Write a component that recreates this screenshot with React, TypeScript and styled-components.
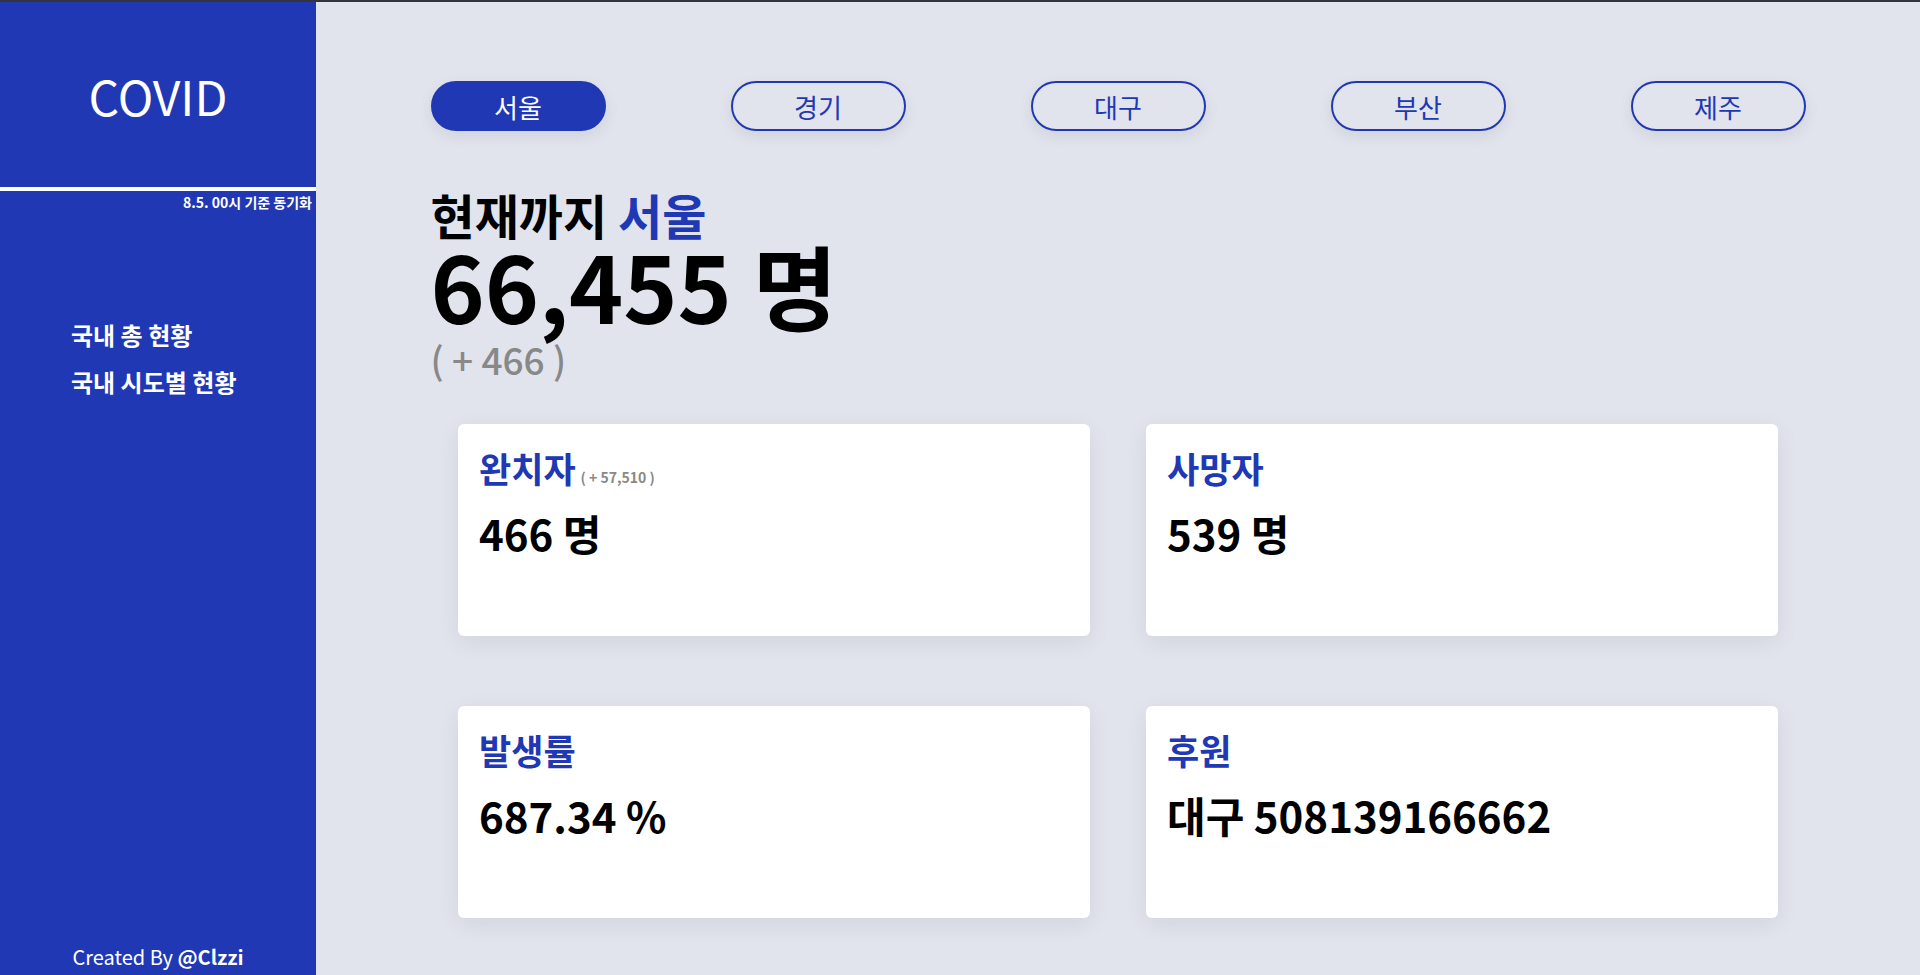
import React, { useState } from 'react';
import styled, { createGlobalStyle } from 'styled-components';

const BLUE = '#2038b4';

const GlobalStyle = createGlobalStyle`
  html, body {
    margin: 0;
    padding: 0;
  }
  body {
    font-family: "Noto Sans CJK KR", "Noto Sans", sans-serif;
  }
  * {
    box-sizing: border-box;
  }
`;

const Page = styled.div`
  display: flex;
  height: 100vh;
  border-top: 2px solid #34353a;
  overflow: hidden;
`;

const Sidebar = styled.aside`
  width: 316px;
  flex-shrink: 0;
  display: flex;
  flex-direction: column;
  background: ${BLUE};
  color: #fff;
`;

const Logo = styled.div`
  height: 185px;
  display: flex;
  align-items: center;
  justify-content: center;
  font-size: 48px;
  font-weight: 400;
`;

const Divider = styled.div`
  height: 4px;
  background: #fff;
`;

const SyncNote = styled.div`
  margin-top: 1px;
  padding-right: 4px;
  text-align: right;
  font-size: 14px;
  font-weight: 700;
`;

const Nav = styled.nav`
  margin-top: 106px;
  padding-left: 71px;
  display: flex;
  flex-direction: column;
  gap: 13px;
`;

const NavItem = styled.a`
  color: #fff;
  font-size: 24px;
  font-weight: 700;
  line-height: 34px;
  text-decoration: none;
  cursor: pointer;
`;

const Footer = styled.footer`
  margin-top: auto;
  padding-bottom: 4px;
  text-align: center;
  font-size: 20px;
  font-weight: 400;

  b {
    font-weight: 700;
  }
`;

const Main = styled.main`
  flex: 1;
  background: #e1e4ec;
  padding-top: 79px;
`;

const Tabs = styled.div`
  display: flex;
  justify-content: center;
  gap: 125px;
`;

const Tab = styled.button<{ $active: boolean }>`
  width: 175px;
  height: 50px;
  border-radius: 25px;
  border: 2px solid ${BLUE};
  background: ${(p) => (p.$active ? BLUE : 'transparent')};
  color: ${(p) => (p.$active ? '#fff' : BLUE)};
  font-family: inherit;
  font-size: 26px;
  font-weight: 400;
  box-shadow: 0 5px 16px rgba(0, 0, 0, 0.08);
  cursor: pointer;
`;

const Content = styled.section`
  width: 1375px;
  margin: 59px auto 0;
`;

const Heading = styled.h2`
  margin: 0;
  font-size: 48px;
  font-weight: 700;
  line-height: 48px;
  color: #000;

  span {
    color: ${BLUE};
  }
`;

const Total = styled.div`
  font-size: 92px;
  font-weight: 700;
  line-height: 92px;
  color: #000;
`;

const Delta = styled.div`
  margin-top: 11px;
  font-size: 37px;
  font-weight: 500;
  line-height: 36px;
  color: #888;
`;

const CardGrid = styled.div`
  width: 1320px;
  margin: 47px auto 0;
  display: grid;
  grid-template-columns: repeat(2, 632px);
  column-gap: 56px;
  row-gap: 70px;
`;

const Card = styled.div`
  height: 212px;
  padding: 18px 21px;
  background: #fff;
  border-radius: 6px;
  box-shadow: 0 6px 24px rgba(0, 0, 0, 0.07);
`;

const CardTitle = styled.div`
  font-size: 35px;
  font-weight: 700;
  color: ${BLUE};
`;

const CardSub = styled.span`
  margin-left: 5px;
  font-size: 14px;
  font-weight: 700;
  color: #888;
`;

const CardValue = styled.div`
  margin-top: 9px;
  font-size: 42px;
  font-weight: 700;
  color: #000;
`;

const regions = ['서울', '경기', '대구', '부산', '제주'];

const stats = [
  { title: '완치자', sub: '( + 57,510 )', value: '466 명' },
  { title: '사망자', value: '539 명' },
  { title: '발생률', value: '687.34 %' },
  { title: '후원', value: '대구 508139166662' },
];

function App() {
  const [region, setRegion] = useState('서울');

  return (
    <Page>
      <GlobalStyle />
      <Sidebar>
        <Logo>COVID</Logo>
        <Divider />
        <SyncNote>8.5. 00시 기준 동기화</SyncNote>
        <Nav>
          <NavItem>국내 총 현황</NavItem>
          <NavItem>국내 시도별 현황</NavItem>
        </Nav>
        <Footer>
          Created By <b>@Clzzi</b>
        </Footer>
      </Sidebar>

      <Main>
        <Tabs>
          {regions.map((r) => (
            <Tab key={r} $active={r === region} onClick={() => setRegion(r)}>
              {r}
            </Tab>
          ))}
        </Tabs>

        <Content>
          <Heading>
            현재까지 <span>{region}</span>
          </Heading>
          <Total>66,455 명</Total>
          <Delta>( + 466 )</Delta>

          <CardGrid>
            {stats.map((s) => (
              <Card key={s.title}>
                <CardTitle>
                  {s.title}
                  {s.sub && <CardSub>{s.sub}</CardSub>}
                </CardTitle>
                <CardValue>{s.value}</CardValue>
              </Card>
            ))}
          </CardGrid>
        </Content>
      </Main>
    </Page>
  );
}

export default App;
